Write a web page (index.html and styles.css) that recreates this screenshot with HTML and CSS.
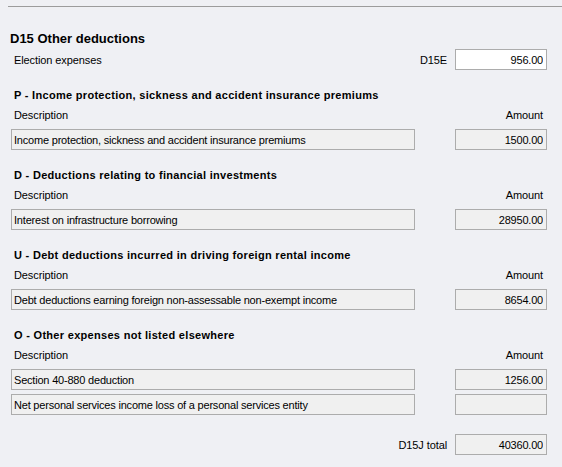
FILE: index.html
```html
<!DOCTYPE html>
<html>
  <head>
    <title>D15 Other deductions</title>
    <link rel="stylesheet" href="styles.css">
  </head>
  <body>
    <div class="rule"></div>
    <div class="form">
      <h1 class="title">D15 Other deductions</h1>
      <div class="row">
        <span class="label">Election expenses</span>
        <span class="code">D15E</span>
        <input class="amount edit" type="text" value="956.00">
      </div>

      <div class="section">
        <h2>P - Income protection, sickness and accident insurance premiums</h2>
        <div class="cols"><span>Description</span><span>Amount</span></div>
        <div class="line">
          <input class="desc" type="text" value="Income protection, sickness and accident insurance premiums" readonly>
          <input class="amount" type="text" value="1500.00" readonly>
        </div>
      </div>

      <div class="section">
        <h2>D - Deductions relating to financial investments</h2>
        <div class="cols"><span>Description</span><span>Amount</span></div>
        <div class="line">
          <input class="desc" type="text" value="Interest on infrastructure borrowing" readonly>
          <input class="amount" type="text" value="28950.00" readonly>
        </div>
      </div>

      <div class="section">
        <h2>U - Debt deductions incurred in driving foreign rental income</h2>
        <div class="cols"><span>Description</span><span>Amount</span></div>
        <div class="line">
          <input class="desc" type="text" value="Debt deductions earning foreign non-assessable non-exempt income" readonly>
          <input class="amount" type="text" value="8654.00" readonly>
        </div>
      </div>

      <div class="section">
        <h2>O - Other expenses not listed elsewhere</h2>
        <div class="cols"><span>Description</span><span>Amount</span></div>
        <div class="line">
          <input class="desc" type="text" value="Section 40-880 deduction" readonly>
          <input class="amount" type="text" value="1256.00" readonly>
        </div>
        <div class="line">
          <input class="desc" type="text" value="Net personal services income loss of a personal services entity" readonly>
          <input class="amount" type="text" value="" readonly>
        </div>
      </div>

      <div class="total">
        <span class="code">D15J total</span>
        <input class="amount" type="text" value="40360.00" readonly>
      </div>
    </div>
  </body>
</html>
```

FILE: styles.css
```css
body {
  margin: 0;
  padding: 0;
  background: #eff0f4;
  font-family: "Liberation Sans", Arial, sans-serif;
  font-size: 11px;
  letter-spacing: -0.1px;
  color: #000;
}
.rule {
  margin: 6px 0 0 8px;
  height: 0;
  border-top: 1px solid #9c9c9c;
}
.form {
  width: 536px;
  margin-left: 11px;
}
.title {
  margin: 24px 0 0 -1px;
  font-size: 13px;
  line-height: 16px;
  font-weight: bold;
  letter-spacing: 0;
}
.row {
  display: flex;
  align-items: center;
  height: 21px;
  margin-top: 2px;
}
.label {
  padding-left: 3px;
  flex: 1;
}
.code {
  margin-right: 8px;
}
input {
  box-sizing: border-box;
  height: 21px;
  margin: 0;
  padding: 0 3px 0 2px;
  border: 1px solid #acacac;
  background: #f0f0f0;
  font-family: "Liberation Sans", Arial, sans-serif;
  font-size: 11px;
  letter-spacing: -0.2px;
  color: #000;
  outline: none;
}
.amount {
  width: 92px;
  text-align: right;
}
.amount.edit {
  background: #fff;
}
.desc {
  width: 404px;
}
.section {
  margin-top: 17px;
}
.section h2 {
  margin: 0;
  padding-left: 3px;
  font-size: 11px;
  line-height: 16px;
  font-weight: bold;
  letter-spacing: 0.3px;
}
.cols {
  display: flex;
  justify-content: space-between;
  line-height: 16px;
  margin-top: 4px;
  padding: 0 4px 0 3px;
}
.line {
  display: flex;
  justify-content: space-between;
  margin-top: 6px;
}
.line + .line {
  margin-top: 4px;
}
.total {
  display: flex;
  justify-content: flex-end;
  align-items: center;
  margin-top: 19px;
}
```
